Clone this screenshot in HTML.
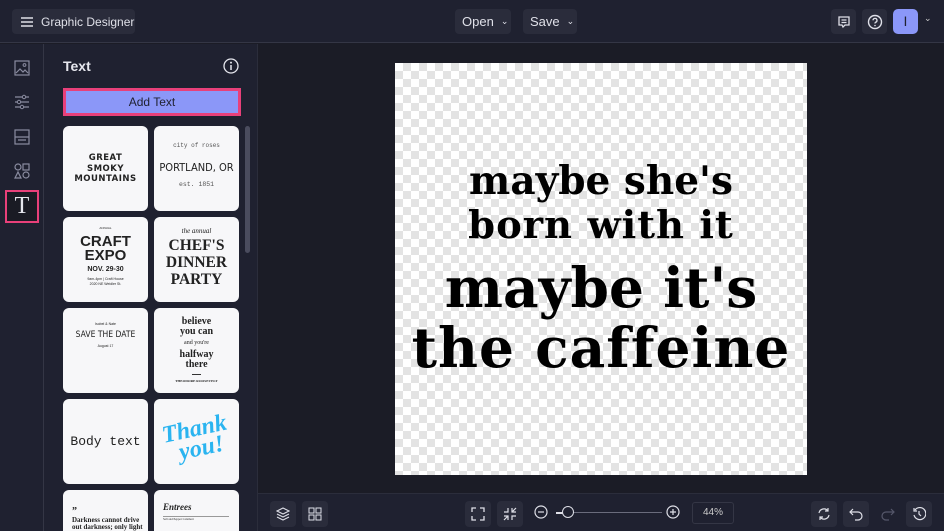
<!DOCTYPE html>
<html><head><style>
*{box-sizing:border-box;margin:0;padding:0}
html,body{width:944px;height:531px;overflow:hidden}
body{background:#1b1c26;font-family:"Liberation Sans",sans-serif;color:#e6e7ee;position:relative}
.top{position:absolute;left:0;top:0;width:944px;height:43px;background:#1f2130;border-bottom:1px solid #343645}
.btn{position:absolute;background:#2a2c3b;border-radius:4px;color:#dfe0e8;font-size:13px;display:flex;align-items:center;white-space:nowrap;overflow:hidden}
.rail{position:absolute;left:0;top:44px;width:44px;height:487px;background:#1f2130;border-right:1px solid #343645}
.panel{position:absolute;left:44px;top:44px;width:214px;height:487px;background:#1f2130;border-right:1px solid #2b2d3b;overflow:hidden}
.card{position:absolute;width:85px;height:85px;background:#f7f7f9;border-radius:6px;overflow:hidden;color:#222;text-align:center}
.canvas{position:absolute;left:395px;top:63px;width:412px;height:412px;background-color:#fff;background-image:linear-gradient(45deg,#e3e3e3 25%,transparent 25%,transparent 75%,#e3e3e3 75%),linear-gradient(45deg,#e3e3e3 25%,transparent 25%,transparent 75%,#e3e3e3 75%);background-size:16px 16px;background-position:0 0,8px 8px;overflow:hidden}
.q{position:absolute;left:0;width:412px;text-align:center;font-family:"DejaVu Serif",serif;font-weight:bold;color:#000;white-space:nowrap}
.bot{position:absolute;left:258px;top:493px;width:686px;height:38px;background:#1f2130;border-top:1px solid #2b2d3b}
.ib{position:absolute;top:7px;width:26px;height:26px;background:#2a2c3b;border-radius:4px;display:flex;align-items:center;justify-content:center}
svg{display:block}
</style></head><body>
<div class="top">
 <div class="btn" style="left:12px;top:9px;width:123px;height:25px;padding-left:8px;font-size:12px">
  <svg width="14" height="12"><path d="M1 2h12M1 6h12M1 10h12" stroke="#dfe0e8" stroke-width="1.5"/></svg>
  <span style="margin-left:7px">Graphic Designer</span></div>
 <div class="btn" style="left:455px;top:9px;width:56px;height:25px;padding-left:7px">Open <span style="font-size:9px;margin-left:7px">&#8964;</span></div>
 <div class="btn" style="left:523px;top:9px;width:54px;height:25px;padding-left:7px">Save <span style="font-size:9px;margin-left:7px">&#8964;</span></div>
 <div class="btn" style="left:831px;top:9px;width:25px;height:25px;justify-content:center"><svg width="14" height="14"><path d="M2 2h10v8H8l-2 2-1-2H2z M4.5 5h5M4.5 7.5h5" fill="none" stroke="#dfe0e8" stroke-width="1.3"/></svg></div>
 <div class="btn" style="left:862px;top:9px;width:25px;height:25px;justify-content:center"><svg width="16" height="16"><circle cx="8" cy="8" r="6.5" fill="none" stroke="#dfe0e8" stroke-width="1.4"/><path d="M6 6.3a2 2 0 1 1 2.5 2c-.5.2-.5.6-.5 1.2" fill="none" stroke="#dfe0e8" stroke-width="1.3"/><circle cx="8" cy="11.5" r=".8" fill="#dfe0e8"/></svg></div>
 <div style="position:absolute;left:893px;top:9px;width:25px;height:25px;background:#8b97f8;border-radius:5px;color:#1f2130;font-size:14px;text-align:center;line-height:25px">I</div>
 <span style="position:absolute;left:924px;top:13px;font-size:9px;color:#ccc">&#8964;</span>
</div>
<div class="rail">
 <svg style="position:absolute;left:14px;top:16px" width="16" height="16"><rect x="1" y="1" width="14" height="14" fill="none" stroke="#8a8ca0" stroke-width="1.2"/><path d="M2 13l4-4 3 3 2-2 3 3" fill="none" stroke="#8a8ca0" stroke-width="1.2"/><circle cx="10.5" cy="5" r="1.4" fill="none" stroke="#8a8ca0"/></svg>
 <svg style="position:absolute;left:14px;top:50px" width="16" height="16"><path d="M1 3h14M1 8h14M1 13h14" stroke="#8a8ca0" stroke-width="1.2"/><circle cx="10" cy="3" r="1.7" fill="#1f2130" stroke="#8a8ca0"/><circle cx="5" cy="8" r="1.7" fill="#1f2130" stroke="#8a8ca0"/><circle cx="8" cy="13" r="1.7" fill="#1f2130" stroke="#8a8ca0"/></svg>
 <svg style="position:absolute;left:14px;top:85px" width="16" height="16"><rect x="1" y="1" width="14" height="14" fill="none" stroke="#8a8ca0" stroke-width="1.2"/><path d="M1 8h14M4 11h8" stroke="#8a8ca0" stroke-width="1.2"/></svg>
 <svg style="position:absolute;left:14px;top:119px" width="16" height="16"><circle cx="4" cy="4" r="3" fill="none" stroke="#8a8ca0" stroke-width="1.2"/><rect x="9" y="1" width="6" height="6" fill="none" stroke="#8a8ca0" stroke-width="1.2"/><path d="M4 9l3 6H1z" fill="none" stroke="#8a8ca0" stroke-width="1.2"/><circle cx="12" cy="12" r="3" fill="none" stroke="#8a8ca0" stroke-width="1.2"/></svg>
 <div style="position:absolute;left:5px;top:146px;width:34px;height:33px;border:2px solid #e8407a;background:#1a1b24;color:#e6e7ee;font-family:'Liberation Serif',serif;font-size:24px;text-align:center;line-height:28px">T</div>
</div>
<div class="panel">
 <div style="position:absolute;left:19px;top:14px;font-size:14px;font-weight:bold">Text</div>
 <svg style="position:absolute;left:179px;top:14px" width="16" height="16"><circle cx="8" cy="8" r="7" fill="none" stroke="#e6e7ee" stroke-width="1.3"/><path d="M8 7v5" stroke="#e6e7ee" stroke-width="1.5"/><circle cx="8" cy="4.6" r="1" fill="#e6e7ee"/></svg>
 <div style="position:absolute;left:19px;top:44px;width:178px;height:28px;background:#8b97f8;border:3px solid #e8407a;color:#1f2130;font-size:12px;text-align:center;line-height:22px">Add Text</div>
 <div style="position:absolute;left:201px;top:82px;width:5px;height:127px;background:#4a4c5e;border-radius:3px"></div>
 <div class="card" style="left:19px;top:82px;padding-top:27px;font-family:'DejaVu Sans';font-weight:bold;font-size:8.5px;line-height:10.5px;letter-spacing:.5px">GREAT<br>SMOKY<br>MOUNTAINS</div>
 <div class="card" style="left:110px;top:82px;font-family:'Liberation Mono';"><div style="font-size:6px;margin-top:16px;color:#555">city of roses</div><div style="font-family:'DejaVu Sans Condensed','Liberation Sans';font-size:11px;margin-top:12px">PORTLAND, OR</div><div style="font-size:6.5px;margin-top:7px;color:#555">est. 1851</div></div>
 <div class="card" style="left:19px;top:173px"><div style="font-size:3px;margin-top:9px">ANNUAL</div><div style="font-weight:bold;font-size:15px;line-height:14px;margin-top:5px">CRAFT<br>EXPO</div><div style="font-size:7px;font-weight:bold;margin-top:3px">NOV. 29-30</div><div style="font-size:3.5px;margin-top:4px;line-height:5px">9am-4pm | Craft House<br>2020 NE Weidler St.</div></div>
 <div class="card" style="left:110px;top:173px;font-family:'Liberation Serif';font-weight:bold"><div style="font-size:7px;font-weight:normal;font-style:italic;margin-top:10px">the annual</div><div style="font-size:15.5px;line-height:17px;margin-top:2px">CHEF'S<br>DINNER<br>PARTY</div></div>
 <div class="card" style="left:19px;top:264px"><div style="font-size:3.5px;margin-top:14px">Isobel &amp; Nate</div><div style="font-size:8.5px;margin-top:4px;font-family:'DejaVu Sans Condensed'">SAVE THE DATE</div><div style="font-size:3.5px;margin-top:4px">August 17</div></div>
 <div class="card" style="left:110px;top:264px;font-family:'Liberation Serif';font-weight:bold"><div style="font-size:10px;line-height:9.5px;margin-top:9px">believe<br>you can</div><div style="font-size:6px;font-weight:normal;margin-top:4px">and you're</div><div style="font-size:10px;line-height:9.5px;margin-top:4px">halfway<br>there</div><div style="width:9px;height:1px;background:#333;margin:5px auto 0"></div><div style="font-size:3.5px;margin-top:4px">THEODORE ROOSEVELT</div></div>
 <div class="card" style="left:19px;top:355px;font-family:'Liberation Mono';font-size:13px;line-height:85px">Body text</div>
 <div class="card" style="left:110px;top:355px;color:#2ab4f0;font-family:'Liberation Serif';font-style:italic;font-weight:bold;font-size:24px;line-height:20px;padding-top:20px"><div style="transform:rotate(-12deg)">Thank<br>&nbsp;you!</div></div>
 <div class="card" style="left:19px;top:446px;text-align:left;padding:16px 0 0 9px;font-family:'Liberation Serif'"><div style="font-weight:bold;font-size:10px">&#8221;</div><div style="font-size:7px;font-weight:bold;line-height:7px">Darkness cannot drive<br>out darkness; only light</div></div>
 <div class="card" style="left:110px;top:446px;text-align:left;padding:12px 0 0 9px;font-family:'Liberation Serif'"><div style="font-size:9px;font-style:italic;font-weight:bold">Entrees</div><div style="border-top:1px solid #999;margin-top:4px;width:66px;font-size:3px">Salt and Pepper Calamari</div></div>
</div>
<div class="canvas">
 <div class="q" style="top:98px;font-size:39px;line-height:40px">maybe she's</div>
 <div class="q" style="top:143px;font-size:38.5px;line-height:40px;letter-spacing:1px">born with it</div>
 <div class="q" style="top:197px;font-size:55px;line-height:56px">maybe it's</div>
 <div class="q" style="top:257px;font-size:55px;line-height:56px;letter-spacing:1px">the caffeine</div>
</div>
<div class="bot">
 <div class="ib" style="left:12px"><svg width="14" height="14"><path d="M7 1l6 3-6 3-6-3z M1 7l6 3 6-3 M1 10l6 3 6-3" fill="none" stroke="#dfe0e8" stroke-width="1.1"/></svg></div>
 <div class="ib" style="left:44px"><svg width="14" height="14"><rect x="1" y="1" width="5" height="5" fill="none" stroke="#dfe0e8"/><rect x="8" y="1" width="5" height="5" fill="none" stroke="#dfe0e8"/><rect x="1" y="8" width="5" height="5" fill="none" stroke="#dfe0e8"/><rect x="8" y="8" width="5" height="5" fill="none" stroke="#dfe0e8"/></svg></div>
 <div class="ib" style="left:207px"><svg width="14" height="14"><path d="M1 5V1h4M9 1h4v4M13 9v4H9M5 13H1V9" fill="none" stroke="#dfe0e8" stroke-width="1.3"/></svg></div>
 <div class="ib" style="left:239px"><svg width="14" height="14"><path d="M1 5h4V1M9 1v4h4M13 9H9v4M5 13V9H1M9 5l4-4M1 13l4-4" fill="none" stroke="#dfe0e8" stroke-width="1.2"/></svg></div>
 <svg style="position:absolute;left:276px;top:11px" width="14" height="14"><circle cx="7" cy="7" r="6" fill="none" stroke="#dfe0e8" stroke-width="1.2"/><path d="M4 7h6" stroke="#dfe0e8" stroke-width="1.2"/></svg>
 <div style="position:absolute;left:298px;top:18px;width:106px;height:1px;background:#6a6c7c"></div>
 <div style="position:absolute;left:298px;top:18px;width:8px;height:1.5px;background:#dfe0e8"></div>
 <div style="position:absolute;left:304px;top:12px;width:12px;height:12px;border:1.5px solid #dfe0e8;border-radius:50%;background:#1f2130"></div>
 <svg style="position:absolute;left:408px;top:11px" width="14" height="14"><circle cx="7" cy="7" r="6" fill="none" stroke="#dfe0e8" stroke-width="1.2"/><path d="M4 7h6M7 4v6" stroke="#dfe0e8" stroke-width="1.2"/></svg>
 <div style="position:absolute;left:434px;top:8px;width:42px;height:22px;border:1px solid #343645;border-radius:3px;font-size:10px;color:#ccc;text-align:center;line-height:20px">44%</div>
 <div class="ib" style="left:553px"><svg width="14" height="14"><path d="M2 6a5 5 0 0 1 9-2M12 8a5 5 0 0 1-9 2M11 1v3H8M3 13v-3h3" fill="none" stroke="#dfe0e8" stroke-width="1.2"/></svg></div>
 <div class="ib" style="left:585px"><svg width="14" height="14"><path d="M4 2L1 5l3 3M1 5h8a4 4 0 0 1 0 8H6" fill="none" stroke="#dfe0e8" stroke-width="1.2"/></svg></div>
 <div class="ib" style="left:617px;background:none"><svg width="14" height="14"><path d="M10 2l3 3-3 3M13 5H5a4 4 0 0 0 0 8h3" fill="none" stroke="#55576a" stroke-width="1.2"/></svg></div>
 <div class="ib" style="left:648px"><svg width="14" height="14"><path d="M3 3a6 6 0 1 1-1 5M2 1v3h3M7 4v3l2 2" fill="none" stroke="#dfe0e8" stroke-width="1.2"/></svg></div>
</div>
</body></html>
